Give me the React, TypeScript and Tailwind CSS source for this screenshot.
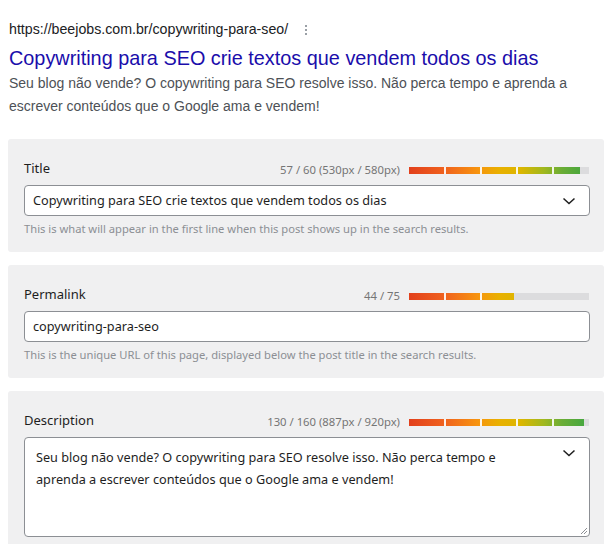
import React from 'react';

const ChevronDown = () => (
  <svg width="16" height="16" viewBox="0 0 16 16" fill="none" stroke="#1e1e1e" strokeWidth="1.5">
    <path d="M2.5 5.5L8 10.5L13.5 5.5" />
  </svg>
);

// Gradient bar with separators, gray cover for the unused part
const LengthBar = ({ fill }: { fill: number }) => (
  <div className="relative h-[7px] w-[180px] bg-[linear-gradient(to_right,#e2401c_0%,#f0621e_20%,#f7930f_38%,#e9b000_50%,#dcb600_62%,#a0b81f_75%,#6aad36_85%,#3fa641_100%)]">
    <div className="absolute top-0 bottom-0 left-[35px] w-[1.5px] bg-white/90" />
    <div className="absolute top-0 bottom-0 left-[71px] w-[1.5px] bg-white/90" />
    <div className="absolute top-0 bottom-0 left-[107px] w-[1.5px] bg-white/90" />
    <div className="absolute top-0 bottom-0 left-[143px] w-[1.5px] bg-white/90" />
    <div className="absolute top-0 bottom-0 right-0 bg-[#dcdcde]" style={{ left: fill }} />
  </div>
);

interface FieldProps {
  label: string;
  counter: string;
  fill: number;
  children: React.ReactNode;
  help?: string;
}

const Field = ({ label, counter, fill, children, help }: FieldProps) => (
  <div className="rounded-[3px] bg-[#f0f0f1] pl-4 pr-[15px] pt-[20px] pb-[15px]">
    <div className="flex h-[18px] items-center justify-between">
      <span className="text-[13px] text-[#1e1e1e] leading-[18px]">{label}</span>
      <div className="flex items-center gap-[9px] h-[18px] translate-y-[2px]">
        <span className="text-[11.3px] leading-[18px] text-[#757575]">{counter}</span>
        <LengthBar fill={fill} />
      </div>
    </div>
    <div className="mt-[8px] mr-[-1px]">{children}</div>
    {help && <p className="mt-[5px] h-[16px] text-[11.2px] leading-[16px] text-[#8c8f94]">{help}</p>}
  </div>
);

export default function App() {
  return (
    <div className="w-[615px] h-[544px] overflow-hidden bg-white font-['Noto_Sans',sans-serif]">
      {/* Search preview */}
      <div className="px-[9px] pt-[20px] font-['Liberation_Sans',Arial,sans-serif]">
        <div className="flex items-center h-[20px]">
          <span className="text-[14.2px] text-[#202124]">https://beejobs.com.br/copywriting-para-seo/</span>
          <span className="ml-[17px] flex flex-col gap-[2px]">
            <span className="h-[2px] w-[2px] bg-[#9aa0a6]" />
            <span className="h-[2px] w-[2px] bg-[#9aa0a6]" />
            <span className="h-[2px] w-[2px] bg-[#9aa0a6]" />
          </span>
        </div>
        <div className="mt-[5px] text-[19.85px] leading-[26px] text-[#1a0dab]">
          Copywriting para SEO crie textos que vendem todos os dias
        </div>
        <p className="mt-[1px] text-[14px] leading-[23px] text-[#4d5156]">
          Seu blog não vende? O copywriting para SEO resolve isso. Não perca tempo e aprenda a escrever conteúdos que o Google ama e vendem!
        </p>
      </div>

      <div className="mx-[8px] mt-[21px] flex flex-col gap-[13px] w-[596px]">
        <Field
          label="Title"
          counter="57 / 60 (530px / 580px)"
          fill={171}
          help="This is what will appear in the first line when this post shows up in the search results."
        >
          <div className="flex h-[31px] items-center justify-between rounded-[4px] border border-[#8c8f94] bg-white pl-[8px] pr-[12px]">
            <span className="text-[12.7px] text-[#1e1e1e]">Copywriting para SEO crie textos que vendem todos os dias</span>
            <ChevronDown />
          </div>
        </Field>

        <Field
          label="Permalink"
          counter="44 / 75"
          fill={105}
          help="This is the unique URL of this page, displayed below the post title in the search results."
        >
          <div className="flex h-[31px] items-center rounded-[4px] border border-[#8c8f94] bg-white pl-[8px]">
            <span className="text-[12.7px] text-[#1e1e1e]">copywriting-para-seo</span>
          </div>
        </Field>

        <Field label="Description" counter="130 / 160 (887px / 920px)" fill={175}>
          <div className="relative h-[100px] rounded-[4px] border border-[#8c8f94] bg-white pl-[11px] pr-[60px] pt-[8px]">
            <p className="text-[12.7px] leading-[22px] text-[#1e1e1e]">
              Seu blog não vende? O copywriting para SEO resolve isso. Não perca tempo e aprenda a escrever conteúdos que o Google ama e vendem!
            </p>
            <span className="absolute right-[12px] top-[7px]">
              <ChevronDown />
            </span>
            <svg className="absolute right-[2px] bottom-[2px]" width="7" height="7" viewBox="0 0 7 7" stroke="#8c8f94" strokeWidth="1">
              <path d="M7 1L1 7M7 4L4 7" />
            </svg>
          </div>
        </Field>
      </div>
    </div>
  );
}
